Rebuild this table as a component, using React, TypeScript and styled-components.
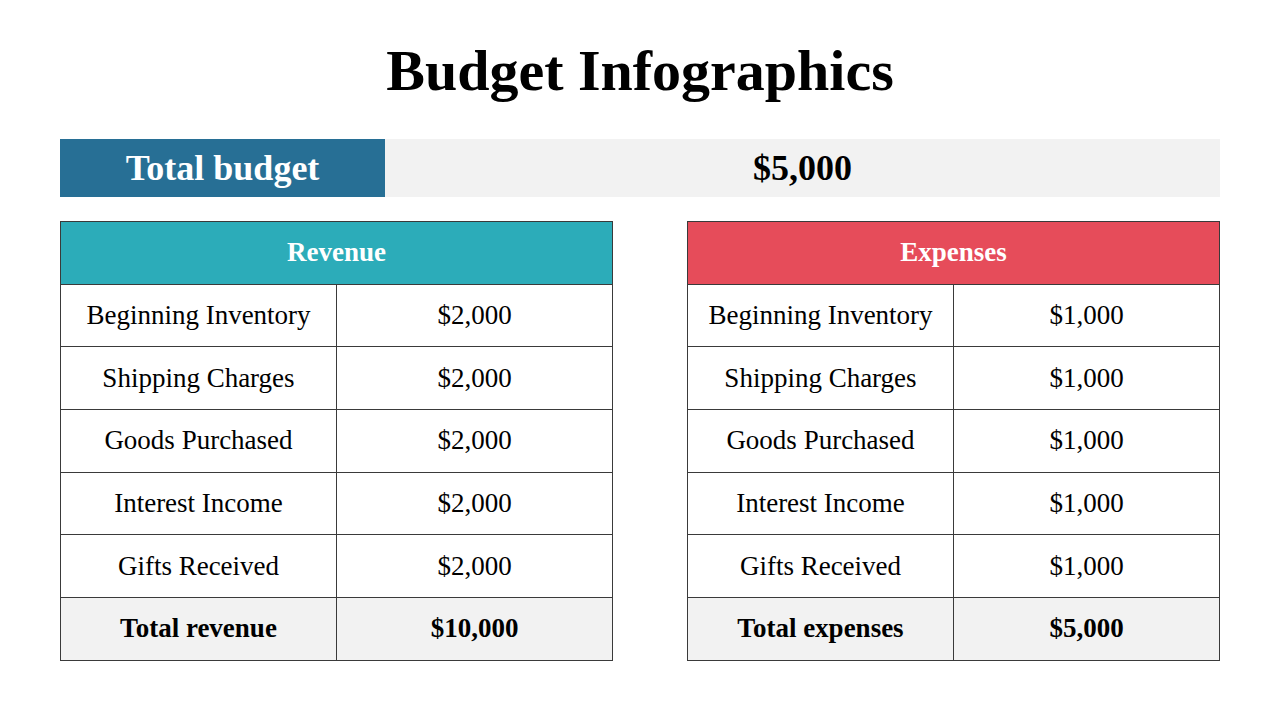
import React from 'react';
import styled, {createGlobalStyle} from "styled-components";

const GlobalStyle = createGlobalStyle`
  body {
    margin: 0;
    background: #ffffff;
    font-family: "Liberation Serif", "DejaVu Serif", serif;
    color: #000;
  }
`

type Row = { label: string, value: string }

const revenue: Row[] = [
    {label: "Beginning Inventory", value: "$2,000"},
    {label: "Shipping Charges", value: "$2,000"},
    {label: "Goods Purchased", value: "$2,000"},
    {label: "Interest Income", value: "$2,000"},
    {label: "Gifts Received", value: "$2,000"},
]

const expenses: Row[] = [
    {label: "Beginning Inventory", value: "$1,000"},
    {label: "Shipping Charges", value: "$1,000"},
    {label: "Goods Purchased", value: "$1,000"},
    {label: "Interest Income", value: "$1,000"},
    {label: "Gifts Received", value: "$1,000"},
]

const BudgetTable = (props: { title: string, color: string, rows: Row[], totalLabel: string, total: string }) => {
    return (
        <Table>
            <thead>
            <TableRow>
                <HeadCell colSpan={2} $color={props.color}>{props.title}</HeadCell>
            </TableRow>
            </thead>
            <tbody>
            {props.rows.map(r => (
                <TableRow key={r.label}>
                    <Cell>{r.label}</Cell>
                    <Cell>{r.value}</Cell>
                </TableRow>
            ))}
            <TableRow $total>
                <Cell>{props.totalLabel}</Cell>
                <Cell>{props.total}</Cell>
            </TableRow>
            </tbody>
        </Table>
    )
}

export default function App() {
    return (
        <Page>
            <GlobalStyle/>
            <Title>Budget Infographics</Title>
            <BudgetBar>
                <BudgetLabel>Total budget</BudgetLabel>
                <BudgetValue>$5,000</BudgetValue>
            </BudgetBar>
            <Tables>
                <BudgetTable title="Revenue" color="#2cacb9" rows={revenue}
                             totalLabel="Total revenue" total="$10,000"/>
                <BudgetTable title="Expenses" color="#e64c5a" rows={expenses}
                             totalLabel="Total expenses" total="$5,000"/>
            </Tables>
        </Page>
    );
};

const Page = styled.div`
  width: 1280px;
  height: 720px;
  box-sizing: border-box;
  padding: 0 60px;
  display: flex;
  flex-direction: column;
`

const Title = styled.h1`
  margin: 38px 0 0;
  height: 101px;
  font-size: 58px;
  line-height: 66px;
  font-weight: 700;
  text-align: center;
`

const BudgetBar = styled.div`
  display: flex;
  height: 58px;
  background-color: #f2f2f2;
  font-size: 36px;
  font-weight: 700;
`

const BudgetLabel = styled.div`
  width: 325px;
  background-color: #276f95;
  color: #fff;
  display: flex;
  align-items: center;
  justify-content: center;
`

const BudgetValue = styled.div`
  flex: 1;
  display: flex;
  align-items: center;
  justify-content: center;
`

const Tables = styled.div`
  margin-top: 24px;
  display: grid;
  grid-template-columns: 553px 533px;
  justify-content: space-between;
`

const Table = styled.table`
  width: 100%;
  border-collapse: collapse;
  table-layout: fixed;
  font-size: 27px;
`

const TableRow = styled.tr<{ $total?: boolean }>`
  height: 62.7px;
  background-color: ${p => p.$total ? "#f2f2f2" : "transparent"};
  font-weight: ${p => p.$total ? 700 : 400};
`

const HeadCell = styled.th<{ $color: string }>`
  background-color: ${p => p.$color};
  color: #fff;
  font-weight: 700;
  font-size: 27px;
  border: 1px solid #3a3a3a;
  text-align: center;
  padding: 0;
`

const Cell = styled.td`
  border: 1px solid #3a3a3a;
  text-align: center;
  vertical-align: middle;
  padding: 0;
`
